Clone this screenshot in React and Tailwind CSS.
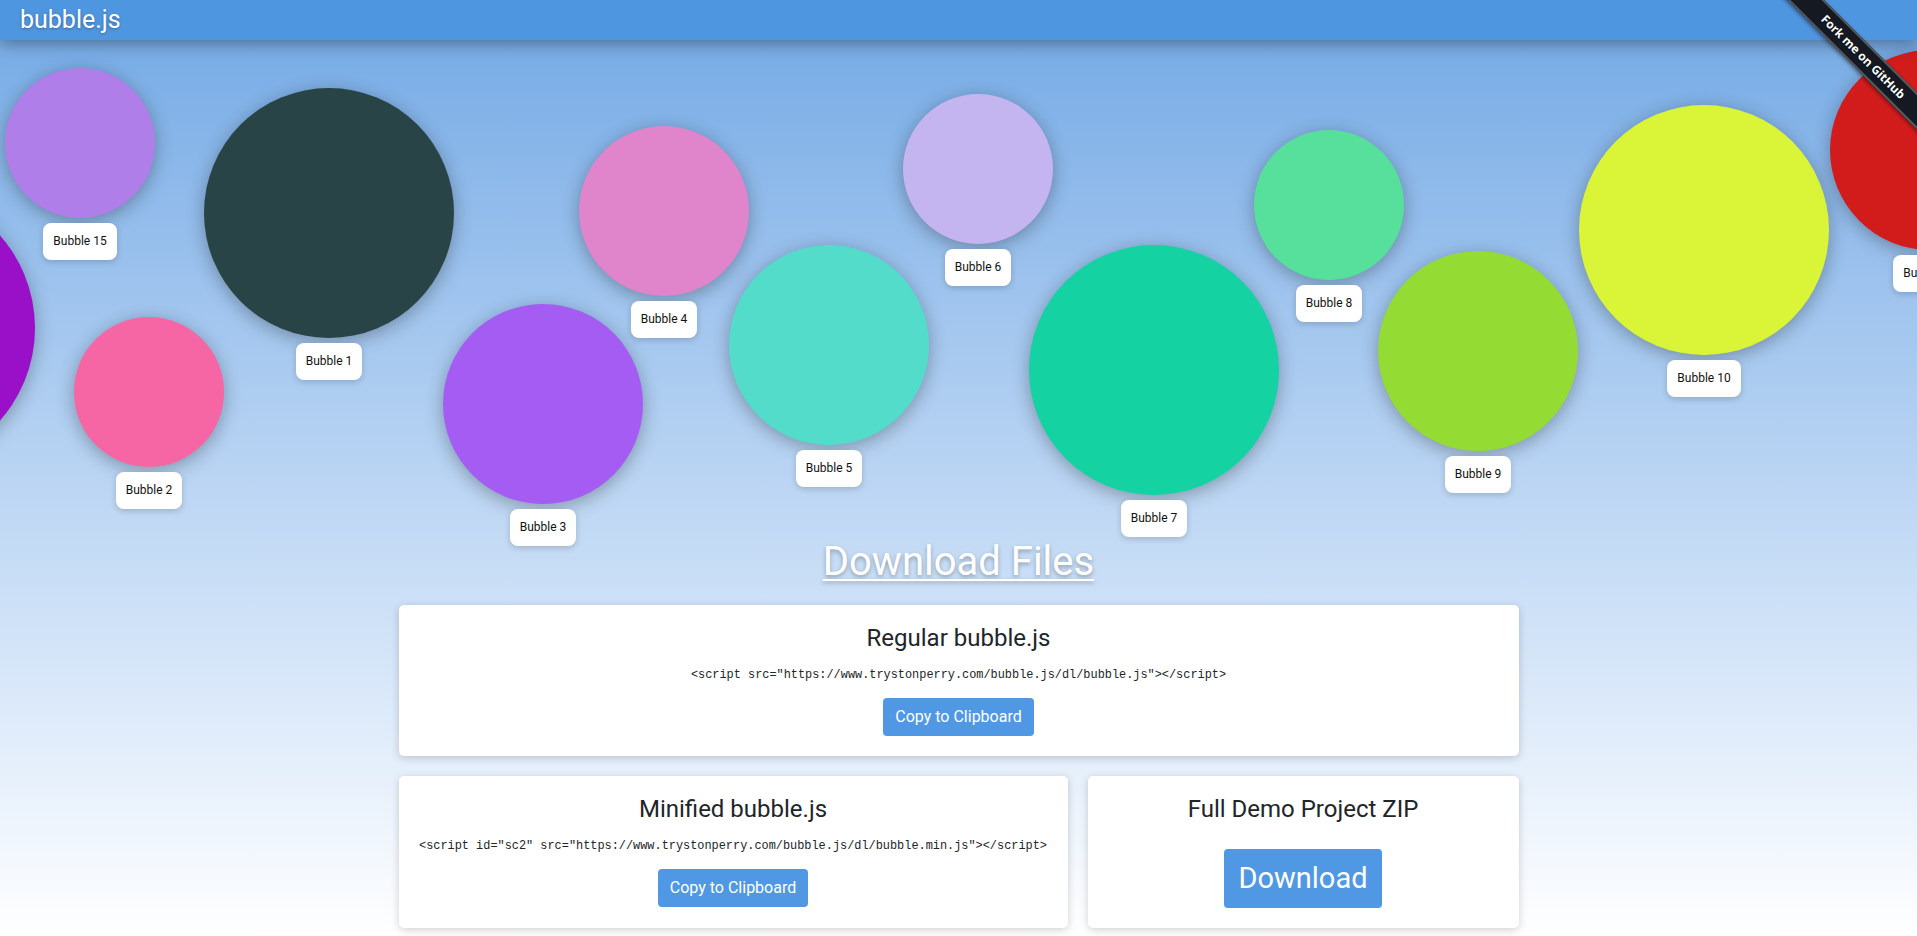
import React from "react"

// ── Bubble data (center x/y in page px, diameter) ─────────
const bubbles = [
  { name: "Bubble 14", cx: -105, cy: 328, d: 280, color: "#9a10c8", hideLabel: true },
  { name: "Bubble 15", cx: 80, cy: 143, d: 150, color: "#b07ee8" },
  { name: "Bubble 1", cx: 329, cy: 213, d: 250, color: "#294446" },
  { name: "Bubble 2", cx: 149, cy: 392, d: 150, color: "#f766a4" },
  { name: "Bubble 3", cx: 543, cy: 404, d: 200, color: "#a55cf2" },
  { name: "Bubble 4", cx: 664, cy: 211, d: 170, color: "#e084cc" },
  { name: "Bubble 5", cx: 829, cy: 345, d: 200, color: "#54dccb" },
  { name: "Bubble 6", cx: 978, cy: 169, d: 150, color: "#c4b4ef" },
  { name: "Bubble 7", cx: 1154, cy: 370, d: 250, color: "#15d2a2" },
  { name: "Bubble 8", cx: 1329, cy: 205, d: 150, color: "#57e09c" },
  { name: "Bubble 9", cx: 1478, cy: 351, d: 200, color: "#94dc33" },
  { name: "Bubble 10", cx: 1704, cy: 230, d: 250, color: "#daf538" },
  { name: "Bubble 11", cx: 1930, cy: 150, d: 200, color: "#d21c1c" },
]

const HEADER_H = 40

function Bubble({ b }) {
  return (
    <div
      className="absolute flex flex-col items-center"
      style={{ left: b.cx - b.d / 2, top: b.cy - b.d / 2 - HEADER_H, width: b.d }}
    >
      <div
        className="rounded-full shadow-[0_4px_18px_rgba(0,0,0,0.3)]"
        style={{ width: b.d, height: b.d, backgroundColor: b.color }}
      />
      {!b.hideLabel && (
        <div className="mt-[5px] bg-white rounded-[8px] px-[10px] py-[10px] text-[12px] leading-[17px] text-[#111] whitespace-nowrap shadow-[0_2px_6px_rgba(0,0,0,0.18)]">
          {b.name}
        </div>
      )}
    </div>
  )
}

function CodeCard({ title, code, className }) {
  return (
    <div className={"bg-white rounded-[5px] shadow-[0_2px_8px_rgba(0,0,0,0.18)] px-4 pt-[19px] pb-[20px] flex flex-col items-center " + className}>
      <h3 className="text-[24px] leading-[29px] text-[#212529]">{title}</h3>
      <code className="mt-[13px] text-[11.9px] leading-[18px] text-[#212529] whitespace-nowrap font-['Liberation_Mono',monospace]">
        {code}
      </code>
      <button className="mt-[14px] bg-[#5098e3] text-white text-[16px] leading-[24px] px-[12px] py-[7px] rounded-[4px]">
        Copy to Clipboard
      </button>
    </div>
  )
}

export default function App() {
  return (
    <div className="relative min-h-screen overflow-hidden bg-linear-to-b from-[#72a8e4] to-white font-['Roboto',sans-serif]">

      {/* ── Header ── */}
      <div className="relative z-10 h-10 bg-[#4f96e0] shadow-[0_4px_16px_rgba(0,0,0,0.35)] flex items-center pl-5">
        <h1 className="text-[25px] leading-[40px] text-white [text-shadow:0_1px_3px_rgba(0,0,0,0.3)]">bubble.js</h1>
      </div>

      {/* ── Fork ribbon ── */}
      <div className="absolute top-0 right-0 w-[150px] h-[150px] overflow-hidden z-30">
        <div className="absolute left-[-4px] top-[44px] w-[200px] h-[26px] rotate-45 bg-[#141922] border-y-2 border-[#555a62] shadow-[0_2px_4px_rgba(0,0,0,0.4)] flex items-center justify-center">
          <span className="text-white text-[12px] font-bold font-['Open_Sans',sans-serif] [text-shadow:0_1px_1px_rgba(0,0,0,0.5)]">Fork me on GitHub</span>
        </div>
      </div>

      {/* ── Bubble canvas ── */}
      <div className="relative h-[498px]">
        {bubbles.map(b => <Bubble key={b.name} b={b} />)}
      </div>

      {/* ── Download Files ── */}
      <div className="relative flex flex-col items-center">
        <h2 className="text-[40px] leading-[48px] text-white underline decoration-2 underline-offset-[4px] [text-shadow:0_2px_4px_rgba(0,0,0,0.3)]">
          Download Files
        </h2>

        <div className="w-[1120px] mt-[19px] flex flex-col gap-5">
          <CodeCard
            title="Regular bubble.js"
            code={'<script src="https://www.trystonperry.com/bubble.js/dl/bubble.js"></script>'}
          />

          <div className="flex gap-5">
            <CodeCard
              className="w-[669px]"
              title="Minified bubble.js"
              code={'<script id="sc2" src="https://www.trystonperry.com/bubble.js/dl/bubble.min.js"></script>'}
            />
            <div className="flex-1 bg-white rounded-[5px] shadow-[0_2px_8px_rgba(0,0,0,0.18)] px-4 pt-[19px] pb-[20px] flex flex-col items-center">
              <h3 className="text-[24px] leading-[29px] text-[#212529]">Full Demo Project ZIP</h3>
              <button className="mt-[25px] bg-[#5098e3] text-white text-[29px] leading-[43px] px-[14px] py-[8px] rounded-[4px]">
                Download
              </button>
            </div>
          </div>
        </div>
      </div>
    </div>
  )
}
